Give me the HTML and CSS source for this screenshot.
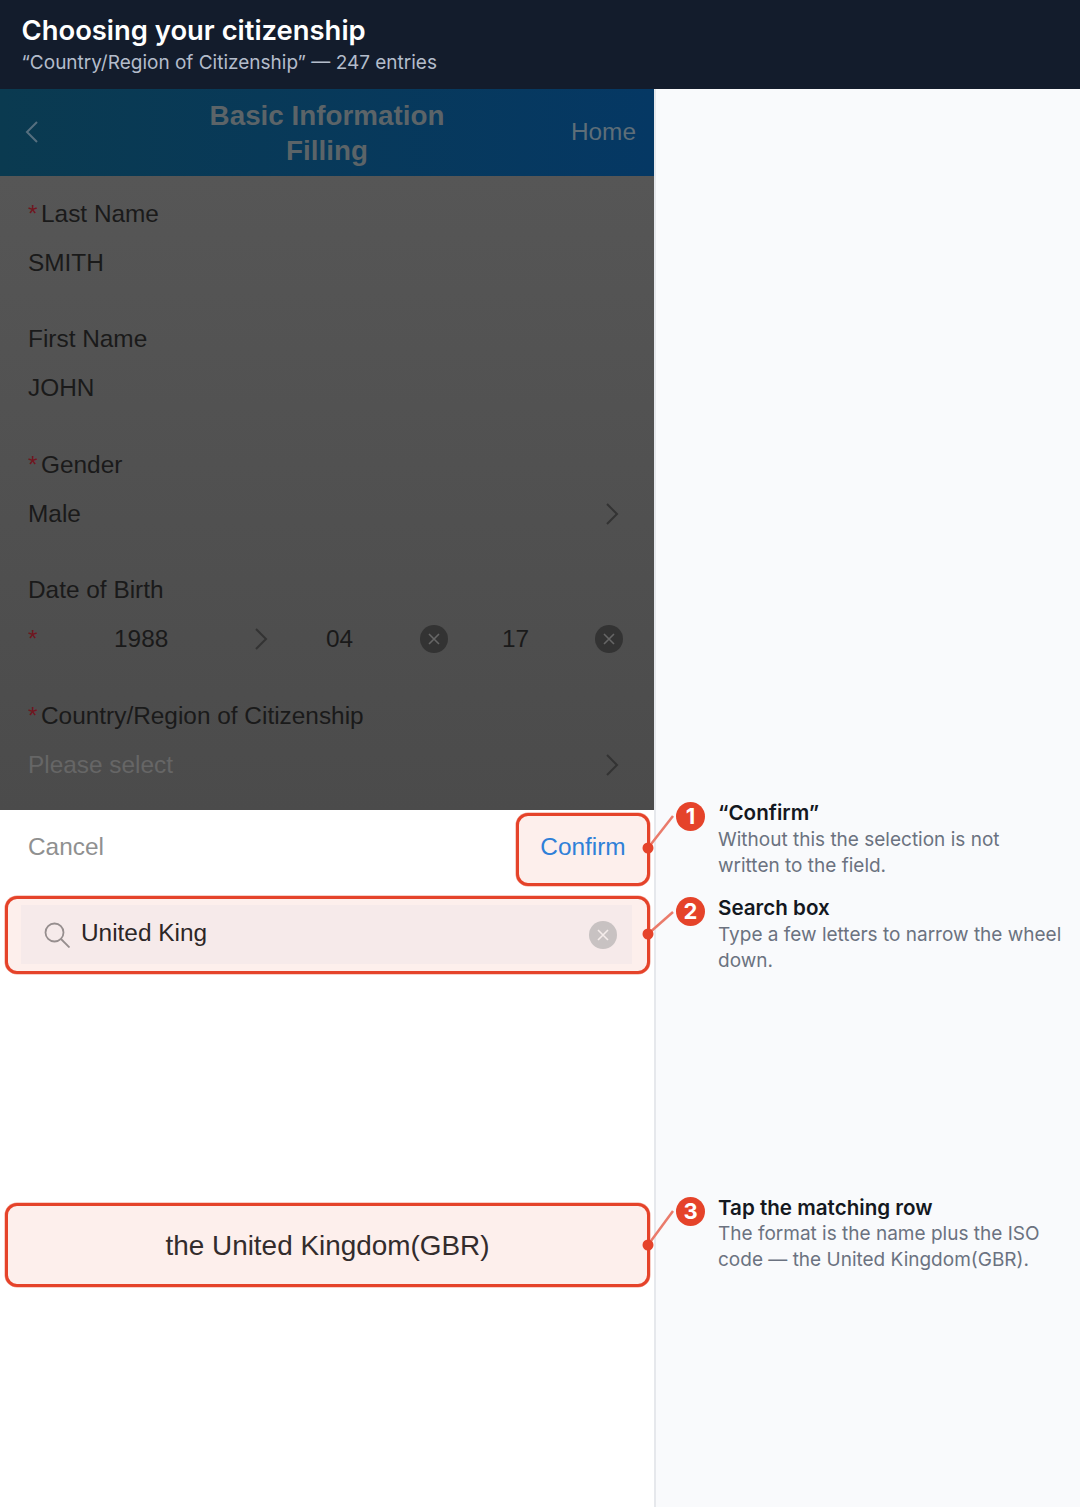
FILE: index.html
```html
<!DOCTYPE html>
<html lang="en">
<head>
<meta charset="utf-8">
<title>Choosing your citizenship</title>
<link rel="stylesheet" href="styles.css">
</head>
<body>
<div class="page">
  <header class="head">
    <h1>Choosing your citizenship</h1>
    <p>“Country/Region of Citizenship” — 247 entries</p>
  </header>
  <main class="main">
    <section class="app">
      <nav class="nav">
        <svg class="back" viewBox="0 0 14 24"><path d="M12 2 2 12l10 10"/></svg>
        <div class="nav-title">Basic Information<br>Filling</div>
        <div class="nav-home">Home</div>
      </nav>
      <form class="form">
        <div class="field">
          <div class="label"><span class="req">*</span>Last Name</div>
          <div class="value">SMITH</div>
        </div>
        <div class="field">
          <div class="label">First Name</div>
          <div class="value">JOHN</div>
        </div>
        <div class="field">
          <div class="label"><span class="req">*</span>Gender</div>
          <div class="value split">Male<svg class="chev" viewBox="0 0 14 24"><path d="M2 2l10 10L2 22"/></svg></div>
        </div>
        <div class="field">
          <div class="label">Date of Birth</div>
          <div class="value date">
            <span class="req date-req">*</span>
            <span class="d-year">1988</span>
            <svg class="chev" viewBox="0 0 14 24"><path d="M2 2l10 10L2 22"/></svg>
            <span class="d-month">04</span>
            <svg class="clear dark" viewBox="0 0 28 28"><circle cx="14" cy="14" r="14"/><path d="M9 9l10 10M19 9 9 19"/></svg>
            <span class="d-day">17</span>
            <svg class="clear dark" viewBox="0 0 28 28"><circle cx="14" cy="14" r="14"/><path d="M9 9l10 10M19 9 9 19"/></svg>
          </div>
        </div>
        <div class="field">
          <div class="label"><span class="req">*</span>Country/Region of Citizenship</div>
          <div class="value split placeholder">Please select<svg class="chev" viewBox="0 0 14 24"><path d="M2 2l10 10L2 22"/></svg></div>
        </div>
      </form>
      <div class="sheet">
        <div class="toolbar">
          <span class="cancel">Cancel</span>
          <span class="confirm mark">Confirm</span>
        </div>
        <div class="search mark">
          <div class="search-inner">
            <svg class="glass" viewBox="0 0 26 26"><circle cx="10.5" cy="10.5" r="9"/><path d="M17 17l8.5 8.5"/></svg>
            <span class="search-text">United King</span>
            <svg class="clear light" viewBox="0 0 28 28"><circle cx="14" cy="14" r="14"/><path d="M9 9l10 10M19 9 9 19"/></svg>
          </div>
        </div>
        <div class="option mark">the United Kingdom(GBR)</div>
      </div>
    </section>
    <aside class="notes">
      <div class="note note-1">
        <span class="badge">1</span>
        <div><h2>“Confirm”</h2><p>Without this the selection is not written to the field.</p></div>
      </div>
      <div class="note note-2">
        <span class="badge">2</span>
        <div><h2>Search box</h2><p>Type a few letters to narrow the wheel down.</p></div>
      </div>
      <div class="note note-3">
        <span class="badge">3</span>
        <div><h2>Tap the matching row</h2><p>The format is the name plus the ISO code — the United Kingdom(GBR).</p></div>
      </div>
    </aside>
  </main>
  <svg class="leaders" viewBox="0 0 1080 1507">
    <g class="lines">
      <path d="M648 848 673 816"/>
      <path d="M648 934 673 912"/>
      <path d="M648 1245 673 1211"/>
    </g>
    <circle cx="648" cy="848" r="5.5"/>
    <circle cx="648" cy="934" r="5.5"/>
    <circle cx="648" cy="1245" r="5.5"/>
  </svg>
</div>
</body>
</html>
```
FILE: styles.css
```css
* { box-sizing: border-box; }
html, body { margin: 0; padding: 0; }
body { background: #f9fafc; font-family: "Liberation Sans", Arial, sans-serif; }
.page { position: relative; width: 1080px; height: 1507px; overflow: hidden; display: flex; flex-direction: column; }

.head { height: 89px; background: #131c2c; padding: 13px 21.5px 0; font-family: Inter, sans-serif; flex: none; }
.head h1 { margin: 0; font-size: 27.4px; line-height: 35px; font-weight: 600; color: #fff; }
.head p { margin: 1px 0 0; font-size: 19px; line-height: 28px; color: #b4bccb; }

.main { flex: 1; display: flex; min-height: 0; }
.app { width: 656px; flex: none; background: #fff; border-right: 2px solid #e6e8ec; display: flex; flex-direction: column; }

.nav { height: 87px; flex: none; display: grid; grid-template-columns: 1fr auto 1fr; align-items: center; background: linear-gradient(90deg, #0a3a50, #053864); padding: 0 18px; }
.back { width: 14px; height: 24px; margin: 0 0 2px 7px; }
.back path { fill: none; stroke: #566f7f; stroke-width: 2; }
.nav-title { text-align: center; font-size: 27.8px; line-height: 35px; font-weight: 700; color: #5c6468; }
.nav-home { font-size: 24.4px; color: #5e6e78; text-align: right; margin-bottom: 2px; }

.form { height: 634px; flex: none; background: linear-gradient(180deg, #565656, #4b4b4b); padding: 19.6px 28px 0; }
.field { height: 125.5px; color: #1a1a1a; font-size: 24.4px; }
.label { height: 36px; line-height: 36px; }
.value { height: 36px; line-height: 36px; margin-top: 13px; }
.req { color: #701620; display: inline-block; width: 13px; }
.split { display: flex; justify-content: space-between; align-items: center; padding-right: 7px; }
.placeholder { color: #666; }
.chev { width: 14px; height: 24px; flex: none; }
.chev path { fill: none; stroke: #333; stroke-width: 2; }

.date { display: flex; align-items: center; }
.date-req { width: 86px; }
.d-year { width: 140px; }
.d-month { width: 94px; margin-left: 58px; }
.d-day { width: 93px; margin-left: 54px; }
.clear { width: 28px; height: 28px; flex: none; }
.clear path { fill: none; stroke-width: 1.6; }
.clear.dark circle { fill: #333; }
.clear.dark path { stroke: #666; }
.clear.light circle { fill: #c8c2c2; }
.clear.light path { stroke: #f4ecea; }

.sheet { flex: 1; background: #fff; display: flex; flex-direction: column; padding: 3px 4px 0 5px; }
.mark { border: 3px solid #e5432a; border-radius: 12px; background: #fdefec; box-shadow: 0 0 0 .5px rgba(229, 67, 42, .5); }
.toolbar { display: flex; justify-content: space-between; align-items: center; font-size: 24.4px; height: 73px; padding-left: 23px; }
.cancel { color: #8f9090; margin-bottom: 6px; }
.confirm { width: 134px; height: 73px; color: #2f80d8; display: flex; align-items: center; justify-content: center; padding-bottom: 6px; }
.search { height: 78px; margin-top: 10px; padding: 6px 15px 6px 13px; }
.search-inner { height: 59px; background: #f6eaea; display: flex; align-items: center; padding: 0 15px 0 23px; font-size: 24.4px; color: #2c2626; }
.glass { width: 26px; height: 26px; flex: none; margin-right: 11px; }
.glass circle, .glass path { fill: none; stroke: #968e8e; stroke-width: 1.8; }
.search-text { flex: 1; margin-bottom: 3px; }
.option { height: 84px; margin-top: 229px; padding-top: 1px; font-size: 27.9px; color: #332c2c; display: flex; align-items: center; justify-content: center; }

.notes { flex: 1; font-family: Inter, sans-serif; padding: 711px 16px 0 20px; }
.note { display: flex; gap: 13px; }
.note h2 { margin: 0 0 1px; font-size: 20.6px; line-height: 26px; font-weight: 600; color: #14181f; }
.note p { margin: 0; font-size: 19px; line-height: 26px; color: #6b7280; }
.note-2 { margin-top: 16px; }
.note-3 { margin-top: 221px; }
.note-3 h2 { margin-bottom: 0; }
.badge { width: 29px; height: 29px; margin-top: 2px; border-radius: 50%; background: #e5432a; color: #fff; font-weight: 700; font-size: 22px; line-height: 29px; text-align: center; flex: none; }

.leaders { position: absolute; inset: 0; width: 1080px; height: 1507px; pointer-events: none; }
.leaders .lines path { fill: none; stroke: #ea7b6b; stroke-width: 2.5; }
.leaders circle { fill: #e5432a; }
```
